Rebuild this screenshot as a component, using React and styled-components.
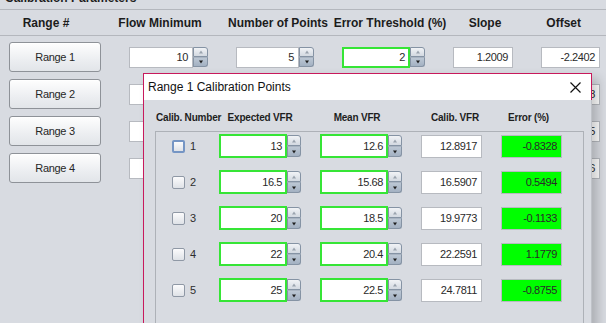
import React from 'react';
import styled, { createGlobalStyle } from 'styled-components';

const GlobalStyle = createGlobalStyle`
  html, body {
    margin: 0;
    padding: 0;
    background: #d8dbe1;
    overflow: hidden;
  }
  body {
    font-family: "Liberation Sans", Arial, sans-serif;
  }
`;

const Screen = styled.div`
  position: relative;
  width: 606px;
  height: 323px;
  overflow: hidden;
  background: #d8dbe1;
`;

const Legend = styled.div`
  height: 9px;
  overflow: hidden;
  padding-left: 5px;
  font-size: 12px;
  font-weight: bold;
  line-height: 12px;
  color: #1e1e1e;

  > span {
    display: block;
    margin-top: -8px;
  }
`;

const HeaderBar = styled.div`
  display: grid;
  grid-template-columns: 92px 136px 86px 152px 38px 1fr;
  align-items: center;
  height: 25px;
  border-top: 1px solid #b4b7bd;
  border-bottom: 1px solid #b4b7bd;
`;

const HeaderCell = styled.div`
  text-align: ${p => (p.$right ? 'right' : 'center')};
  padding-right: ${p => (p.$right ? '25px' : '0')};
  font-size: 12px;
  font-weight: bold;
  color: #1c1c1c;
  white-space: nowrap;
`;

const RangeList = styled.div`
  display: flex;
  flex-direction: column;
  gap: 7px;
  padding-top: 6px;
`;

const RangeRow = styled.div`
  display: flex;
  align-items: center;
  gap: 28px;
  height: 30px;
  padding-left: 9px;
`;

const RangeButton = styled.div`
  box-sizing: border-box;
  width: 92px;
  height: 30px;
  border: 1px solid #8e9298;
  border-radius: 3px;
  background: linear-gradient(#fefefe, #eceef1 60%, #e2e5e9);
  box-shadow: inset 0 1px 0 #fff;
  display: flex;
  align-items: center;
  justify-content: center;
  font-size: 11px;
  letter-spacing: -0.3px;
  color: #262626;
`;

const Field = styled.div`
  box-sizing: border-box;
  width: ${p => p.$w}px;
  height: ${p => p.$h || 21}px;
  background: ${p => (p.$fill ? '#00ff00' : '#ffffff')};
  border: ${p => (p.$green ? '2px solid #36e536' : '1px solid #b7bac0')};
  display: flex;
  align-items: center;
  justify-content: flex-end;
  padding-right: ${p => (p.$green ? 3 : 4)}px;
  font-size: 11px;
  letter-spacing: -0.4px;
  color: #2a2a2a;
  white-space: nowrap;
  overflow: hidden;
`;

const SpinWrap = styled.div`
  display: flex;
  align-items: center;
`;

const Spinner = styled.div`
  display: flex;
  flex-direction: column;
  width: ${p => p.$w || 15}px;
  height: ${p => p.$h || 20}px;
`;

const SpinHalf = styled.div`
  flex: 1;
  box-sizing: border-box;
  position: relative;
  border: 1px solid #8593a4;
  border-top: ${p => (p.$down ? '1px solid #a9b4c2' : '1px solid #8593a4')};
  border-radius: ${p => (p.$down ? '0 0 3px 0' : '0 3px 0 0')};
  background: ${p =>
    p.$down
      ? 'linear-gradient(#bcc7d4, #a3b1c2)'
      : 'linear-gradient(#f1f3f6, #d3d9e1)'};

  &::after {
    content: '';
    position: absolute;
    left: 50%;
    top: 50%;
    transform: translate(-50%, -50%);
    border-left: 2.5px solid transparent;
    border-right: 2.5px solid transparent;
    ${p =>
      p.$down
        ? 'border-top: 3px solid #1e1e1e;'
        : 'border-bottom: 3px solid #9aa3ae;'}
  }
`;

const SpinField = ({ value, w, h, green, sw, sh }) => (
  <SpinWrap>
    <Field $w={w} $h={h} $green={green}>{value}</Field>
    <Spinner $w={sw} $h={sh}>
      <SpinHalf />
      <SpinHalf $down />
    </Spinner>
  </SpinWrap>
);

const Dialog = styled.div`
  position: absolute;
  left: 143px;
  top: 73px;
  width: 449px;
  height: 270px;
  box-sizing: border-box;
  border-left: 1px solid #c8195c;
  border-top: 1px solid #c8195c;
  background: #d8dbe1;
  box-shadow: 6px 5px 10px rgba(0, 0, 0, 0.2);
  display: flex;
  flex-direction: column;
`;

const TitleBar = styled.div`
  height: 26px;
  flex: none;
  background: #ffffff;
  border-right: 1px solid #c8195c;
  display: flex;
  align-items: center;
  justify-content: space-between;
  padding: 0 10px 0 4px;
  font-size: 12px;
  color: #111;
`;

const DialogBody = styled.div`
  flex: 1;
  display: flex;
  flex-direction: column;
  padding: 0 7px 0 11px;
  border-right: 1px solid #bfc2c8;
`;

const pointColumns = '63px 101px 101px 80px 61px';

const ColumnHeads = styled.div`
  display: grid;
  grid-template-columns: ${pointColumns};
  align-items: center;
  height: 28px;
  padding: 3px 0 0 1px;
  flex: none;
`;

const HeadCell = styled.div`
  width: ${p => p.$w}px;
  text-align: center;
  font-size: 10px;
  font-weight: bold;
  letter-spacing: -0.2px;
  color: #1e1e1e;
  white-space: nowrap;
`;

const PointsPanel = styled.div`
  flex: 1;
  border: 1px solid #adb1b7;
  display: flex;
  flex-direction: column;
  gap: 12px;
  padding-top: 2px;
`;

const PointRow = styled.div`
  display: grid;
  grid-template-columns: ${pointColumns};
  align-items: center;
  height: 24px;
`;

const CheckCell = styled.label`
  display: flex;
  align-items: center;
  gap: 5px;
  padding-left: 16px;
  font-size: 11px;
  color: #2e2e2e;
`;

const CheckBox = styled.span`
  box-sizing: border-box;
  width: 13px;
  height: 13px;
  border-radius: 2px;
  border: ${p => (p.$focus ? '2px solid #7595c4' : '1px solid #8f98a5')};
  background: linear-gradient(#fbfbfc, #dfe2e7);
`;

const ranges = [
  { flow: '10', points: '5', err: '2', slope: '1.2009', offset: '-2.2402' },
  { flow: '20', points: '5', err: '2', slope: '1.1874', offset: '-2.1538' },
  { flow: '30', points: '5', err: '2', slope: '1.1652', offset: '-1.9845' },
  { flow: '40', points: '5', err: '2', slope: '1.1437', offset: '-1.7236' },
];

const points = [
  { expected: '13', mean: '12.6', calib: '12.8917', error: '-0.8328' },
  { expected: '16.5', mean: '15.68', calib: '16.5907', error: '0.5494' },
  { expected: '20', mean: '18.5', calib: '19.9773', error: '-0.1133' },
  { expected: '22', mean: '20.4', calib: '22.2591', error: '1.1779' },
  { expected: '25', mean: '22.5', calib: '24.7811', error: '-0.8755' },
];

const CloseIcon = () => (
  <svg width="11" height="11" viewBox="0 0 11 11">
    <path d="M0.5 0.5 L10.5 10.5 M10.5 0.5 L0.5 10.5" stroke="#111" strokeWidth="1.2" />
  </svg>
);

export default function App() {
  return (
    <Screen>
      <GlobalStyle />
      <Legend><span>Calibration Parameters</span></Legend>
      <HeaderBar>
        <HeaderCell>Range #</HeaderCell>
        <HeaderCell>Flow Minimum</HeaderCell>
        <HeaderCell>Number of Points</HeaderCell>
        <HeaderCell>Error Threshold (%)</HeaderCell>
        <HeaderCell>Slope</HeaderCell>
        <HeaderCell $right>Offset</HeaderCell>
      </HeaderBar>
      <RangeList>
        {ranges.map((r, i) => (
          <RangeRow key={i}>
            <RangeButton>Range {i + 1}</RangeButton>
            <SpinField value={r.flow} w={64} />
            <SpinField value={r.points} w={63} />
            <SpinField value={r.err} w={68} green={i === 0} />
            <Field $w={60}>{r.slope}</Field>
            <Field $w={59}>{r.offset}</Field>
          </RangeRow>
        ))}
      </RangeList>

      <Dialog>
        <TitleBar>
          <span>Range 1 Calibration Points</span>
          <CloseIcon />
        </TitleBar>
        <DialogBody>
          <ColumnHeads>
            <HeadCell $w={63}>Calib. Number</HeadCell>
            <HeadCell $w={82}>Expected VFR</HeadCell>
            <HeadCell $w={74}>Mean VFR</HeadCell>
            <HeadCell $w={68}>Calib. VFR</HeadCell>
            <HeadCell $w={55}>Error (%)</HeadCell>
          </ColumnHeads>
          <PointsPanel>
            {points.map((p, i) => (
              <PointRow key={i}>
                <CheckCell>
                  <CheckBox $focus={i === 0} />
                  {i + 1}
                </CheckCell>
                <SpinField value={p.expected} w={68} h={24} green sw={14} sh={22} />
                <SpinField value={p.mean} w={68} h={24} green sw={14} sh={22} />
                <Field $w={61} $h={23}>{p.calib}</Field>
                <Field $w={61} $h={23} $fill>{p.error}</Field>
              </PointRow>
            ))}
          </PointsPanel>
        </DialogBody>
      </Dialog>
    </Screen>
  );
}
